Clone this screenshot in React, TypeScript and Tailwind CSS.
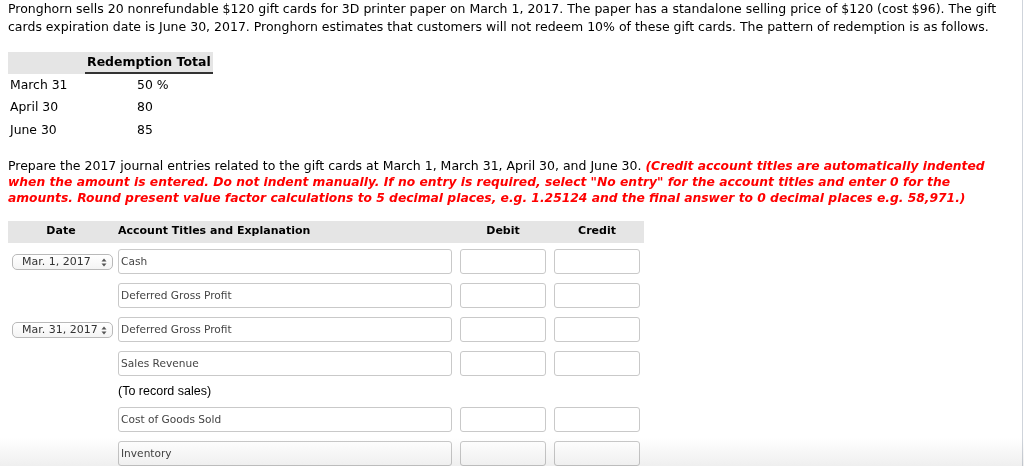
import React from "react";

const body = { fontFamily: '"DejaVu Sans", Verdana, sans-serif' } as const;

function DateSelect({ label }: { label: string }) {
  return (
    <div className="relative flex h-[16px] w-[101px] items-center rounded-[5px] border border-[#b9b9b9] bg-linear-to-b from-white to-[#f4f4f4] pl-[9px] text-[11px] text-[#333]" style={body}>
      <span className="leading-none">{label}</span>
      <svg className="absolute right-[5px] top-[3px]" width="6" height="9" viewBox="0 0 6 9">
        <path d="M3 0.5 L5.5 3.5 L0.5 3.5 Z" fill="#555" />
        <path d="M3 8.5 L5.5 5.5 L0.5 5.5 Z" fill="#555" />
      </svg>
    </div>
  );
}

function Field({ value }: { value?: string }) {
  return (
    <div className="flex h-[25px] w-full items-center rounded-[3px] border border-[#c9c9c9] bg-white pl-[2px] text-[10.6px] text-[#444]" style={body}>
      {value}
    </div>
  );
}

function Row({ date, account }: { date?: string; account: string }) {
  return (
    <div className="grid h-[34px] grid-cols-[106px_342px_94px_94px] items-center">
      <div className="pl-[4px]">{date ? <DateSelect label={date} /> : null}</div>
      <div className="px-[4px]"><Field value={account} /></div>
      <div className="px-[4px]"><Field /></div>
      <div className="px-[4px]"><Field /></div>
    </div>
  );
}

export default function App() {
  return (
    <div className="relative flex h-[466px] overflow-hidden bg-white text-black" style={body}>
      <div className="flex-1 pl-[8px]">
        <p className="whitespace-nowrap text-[12.5px] leading-[18px]">
          Pronghorn sells 20 nonrefundable $120 gift cards for 3D printer paper on March 1, 2017. The paper has a standalone selling price of $120 (cost $96). The gift
          <br />
          cards expiration date is June 30, 2017. Pronghorn estimates that customers will not redeem 10% of these gift cards. The pattern of redemption is as follows.
        </p>

        <div className="mt-[16px] w-[205px] text-[12.4px]">
          <div className="flex h-[22px] bg-[#e5e5e5]">
            <div className="w-[77px]" />
            <div className="flex w-[128px] items-center border-b-2 border-[#333] pl-[2px] text-[12.5px] font-bold">Redemption Total</div>
          </div>
          {[
            ["March 31", "50 %"],
            ["April 30", "80"],
            ["June 30", "85"],
          ].map(([a, b]) => (
            <div key={a} className="flex h-[22.5px] items-center">
              <div className="w-[77px] pl-[2px]">{a}</div>
              <div className="w-[128px] pl-[52px]">{b}</div>
            </div>
          ))}
        </div>

        <p className="mt-[16px] whitespace-nowrap text-[12.5px] leading-[16px]">
          Prepare the 2017 journal entries related to the gift cards at March 1, March 31, April 30, and June 30.{" "}
          <span className="text-[12.3px] font-bold italic text-[#ff0000]">
            (Credit account titles are automatically indented
            <br />
            when the amount is entered. Do not indent manually. If no entry is required, select "No entry" for the account titles and enter 0 for the
            <br />
            amounts. Round present value factor calculations to 5 decimal places, e.g. 1.25124 and the final answer to 0 decimal places e.g. 58,971.)
          </span>
        </p>

        <div className="mt-[15px] w-[636px]">
          <div className="grid h-[22px] grid-cols-[106px_342px_94px_94px] items-center bg-[#e5e5e5] text-[11px] font-bold">
            <div className="text-center">Date</div>
            <div className="pl-[4px]">Account Titles and Explanation</div>
            <div className="text-center">Debit</div>
            <div className="text-center">Credit</div>
          </div>
          <div className="pt-[2px]">
            <Row date="Mar. 1, 2017" account="Cash" />
            <Row account="Deferred Gross Profit" />
            <Row date="Mar. 31, 2017" account="Deferred Gross Profit" />
            <Row account="Sales Revenue" />
            <div className="flex h-[22px] items-center pl-[110px] text-[12.5px]" style={{ fontFamily: '"Liberation Sans", Arial, sans-serif' }}>
              (To record sales)
            </div>
            <Row account="Cost of Goods Sold" />
            <Row account="Inventory" />
          </div>
        </div>
      </div>
      <div className="w-px bg-[#cfd4db]" />
      <div className="w-px bg-white" />
      <div className="pointer-events-none absolute bottom-0 left-0 right-0 h-[28px] bg-linear-to-b from-white to-[#efefef] mix-blend-multiply" />
    </div>
  );
}
